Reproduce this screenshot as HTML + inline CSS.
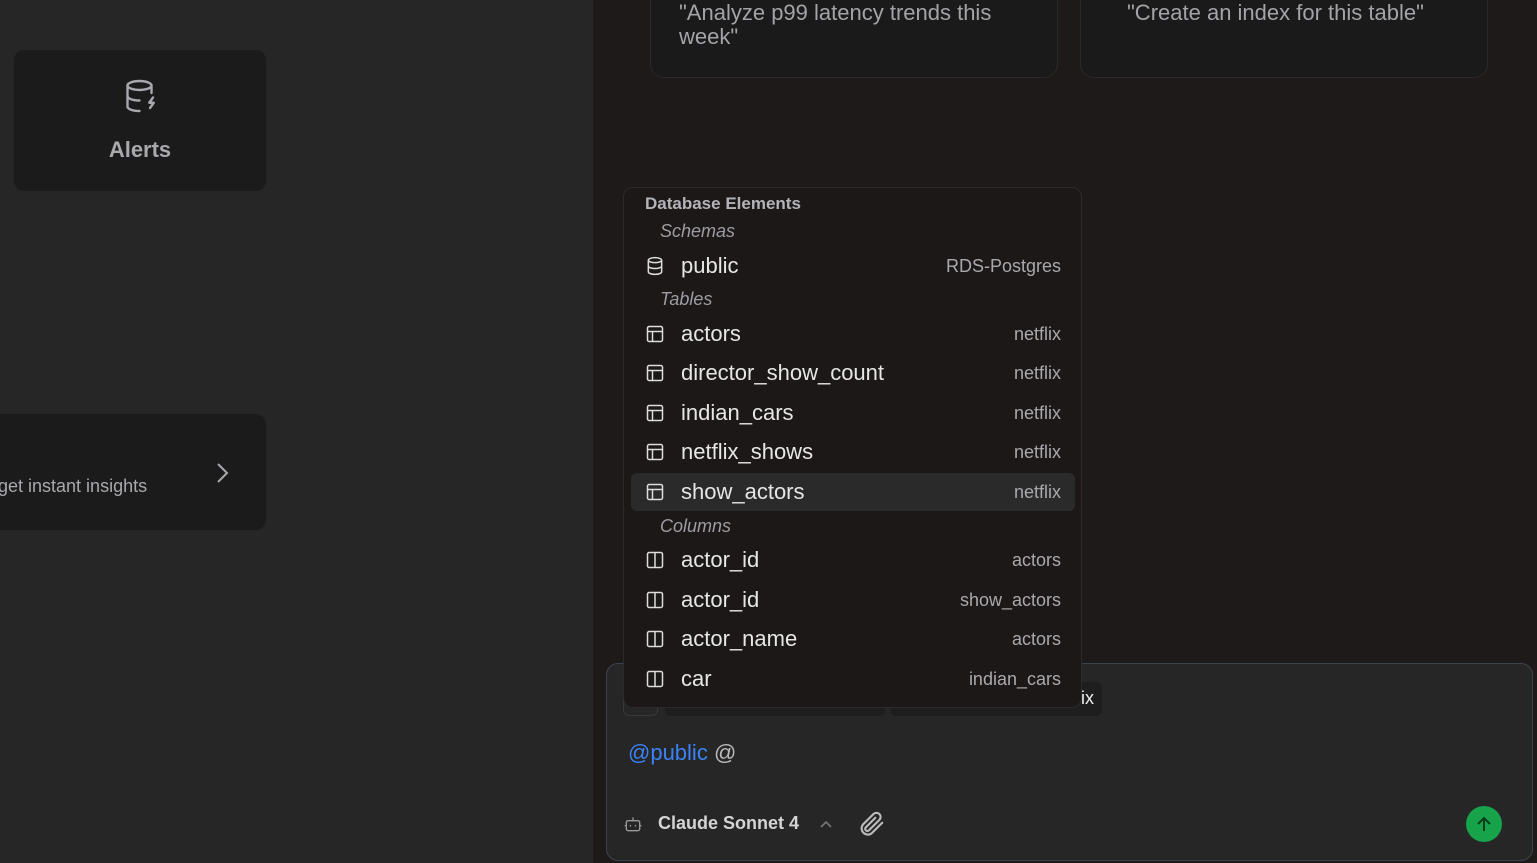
<!DOCTYPE html>
<html><head><style>
*{margin:0;padding:0;box-sizing:border-box}
body{width:1537px;height:863px;overflow:hidden;background:#1e1a19;font-family:"Liberation Sans",sans-serif;position:relative}
.left{position:absolute;left:0;top:0;width:593px;height:863px;background:#262626}
.card{position:absolute;background:#1b1b1b;border-radius:10px}
.abs{position:absolute}
.sug{position:absolute;top:-20px;height:98px;background:#1b1a1a;border:1px solid #2a2a2a;border-radius:14px;color:#a3a3a8;font-size:22px;line-height:24px;padding:20px 28px}
.input{position:absolute;left:606px;top:663px;width:927px;height:198px;background:#262626;border:1px solid #3e424b;border-radius:12px}
.dd{position:absolute;left:623px;top:187px;width:459px;height:521px;background:#1c1817;border:1px solid #2b2b2e;border-radius:10px}
.row{position:absolute;left:7px;width:444px;height:38px;border-radius:6px}
.row .n{position:absolute;left:50px;top:6px;font-size:22px;color:#e6e6e6}
.row .s{position:absolute;right:14px;top:9px;font-size:18px;color:#a9a9ad}
.row svg{position:absolute;left:14px;top:9px}
.h{position:absolute;font-size:18px;font-style:italic;color:#9c9ca2;left:36px}
</style></head><body>
<div class="left"></div>
<div class="card" style="left:14px;top:50px;width:252px;height:141px">
<svg class="abs" style="left:109px;top:28px" width="36" height="36" viewBox="0 0 24 24" fill="none" stroke="#a8a8ad" stroke-width="1.6" stroke-linecap="round" stroke-linejoin="round"><ellipse cx="11" cy="5" rx="8" ry="3"/><path d="M3 5v14c0 1.7 3.6 3 8 3"/><path d="M3 12c0 1.7 3.6 3 8 3"/><path d="M19 5v5"/><path d="M20 13l-2.5 3.5h3L18 20"/></svg>
<div class="abs" style="left:0;width:252px;top:87px;text-align:center;font-size:22px;color:#a8a8ad;font-weight:bold">Alerts</div>
</div>
<div class="card" style="left:-20px;top:414px;width:286px;height:116px">
<div class="abs" style="left:18px;top:62px;font-size:18px;color:#a8a8ad">get instant insights</div>
<svg class="abs" style="left:234px;top:47px" width="16" height="24" viewBox="0 0 16 24" fill="none" stroke="#a8a8ad" stroke-width="2"><path d="M4 3l9 9-9 9"/></svg>
</div>
<div class="sug" style="left:650px;width:408px">"Analyze p99 latency trends this week"</div>
<div class="sug" style="left:1080px;width:408px;padding-left:46px">"Create an index for this table"</div>
<div class="input">
<div class="abs" style="left:16px;top:20px;width:35px;height:32px;border:1px solid #3a3a3a;border-radius:6px"></div>
<div class="abs" style="left:58px;top:18px;width:220px;height:34px;background:#1e1e1e;border-radius:6px"></div>
<div class="abs" style="left:283px;top:18px;width:212px;height:34px;background:#1e1e1e;border-radius:6px;color:#eee;font-size:18px;text-align:right;padding:6px 8px">ix</div>
<div class="abs" style="left:21px;top:76px;font-size:22px;color:#3b82f6">@public <span style="color:#bbb">@</span></div>
<svg class="abs" style="left:16px;top:150px" width="20" height="20" viewBox="0 0 24 24" fill="none" stroke="#999" stroke-width="1.6"><rect x="4" y="8" width="16" height="12" rx="2"/><path d="M12 4v4M2 14h2M20 14h2M9 13v2M15 13v2"/></svg>
<div class="abs" style="left:51px;top:149px;font-size:18px;color:#d4d4d4;font-weight:bold">Claude Sonnet 4</div>
<svg class="abs" style="left:211px;top:152px" width="16" height="16" viewBox="0 0 16 16" fill="none" stroke="#777" stroke-width="1.6"><path d="M3 11l5-5 5 5"/></svg>
<svg class="abs" style="left:249px;top:145px" width="30" height="30" viewBox="0 0 24 24" fill="none" stroke="#bbb" stroke-width="1.7" stroke-linecap="round"><path d="M21 11l-8.5 8.5a5 5 0 01-7-7L14 4a3.3 3.3 0 014.7 4.7l-8.5 8.5a1.7 1.7 0 01-2.4-2.4L15.5 7"/></svg>
<div class="abs" style="left:859px;top:142px;width:36px;height:36px;border-radius:50%;background:#16a34a"></div>
<svg class="abs" style="left:867px;top:150px" width="20" height="20" viewBox="0 0 20 20" fill="none" stroke="#0b3d1c" stroke-width="2"><path d="M10 17V4M4 10l6-6 6 6"/></svg>
</div>
<div class="dd">
<div class="abs" style="left:21px;top:6px;font-size:17px;color:#b3b3b8;font-weight:bold">Database Elements</div>
<div class="h" style="top:33px">Schemas</div>
<div class="row" style="top:59px"><svg width="20" height="20" viewBox="0 0 24 24" fill="none" stroke="#ddd" stroke-width="1.8"><ellipse cx="12" cy="5" rx="8" ry="3"/><path d="M4 5v14c0 1.7 3.6 3 8 3s8-1.3 8-3V5M4 12c0 1.7 3.6 3 8 3s8-1.3 8-3"/></svg><span class="n">public</span><span class="s">RDS-Postgres</span></div>
<div class="h" style="top:101px">Tables</div>
<div class="row" style="top:127px"><svg width="20" height="20" viewBox="0 0 24 24" fill="none" stroke="#ddd" stroke-width="1.8"><rect x="3" y="3" width="18" height="18" rx="2"/><path d="M3 9h18M9 9v12"/></svg><span class="n">actors</span><span class="s">netflix</span></div>
<div class="row" style="top:166px"><svg width="20" height="20" viewBox="0 0 24 24" fill="none" stroke="#ddd" stroke-width="1.8"><rect x="3" y="3" width="18" height="18" rx="2"/><path d="M3 9h18M9 9v12"/></svg><span class="n">director_show_count</span><span class="s">netflix</span></div>
<div class="row" style="top:206px"><svg width="20" height="20" viewBox="0 0 24 24" fill="none" stroke="#ddd" stroke-width="1.8"><rect x="3" y="3" width="18" height="18" rx="2"/><path d="M3 9h18M9 9v12"/></svg><span class="n">indian_cars</span><span class="s">netflix</span></div>
<div class="row" style="top:245px"><svg width="20" height="20" viewBox="0 0 24 24" fill="none" stroke="#ddd" stroke-width="1.8"><rect x="3" y="3" width="18" height="18" rx="2"/><path d="M3 9h18M9 9v12"/></svg><span class="n">netflix_shows</span><span class="s">netflix</span></div>
<div class="row" style="top:285px;background:#2a2a2b"><svg width="20" height="20" viewBox="0 0 24 24" fill="none" stroke="#ddd" stroke-width="1.8"><rect x="3" y="3" width="18" height="18" rx="2"/><path d="M3 9h18M9 9v12"/></svg><span class="n">show_actors</span><span class="s">netflix</span></div>
<div class="h" style="top:328px">Columns</div>
<div class="row" style="top:353px"><svg width="20" height="20" viewBox="0 0 24 24" fill="none" stroke="#ddd" stroke-width="1.8"><rect x="3" y="3" width="18" height="18" rx="2"/><path d="M12 3v18"/></svg><span class="n">actor_id</span><span class="s">actors</span></div>
<div class="row" style="top:393px"><svg width="20" height="20" viewBox="0 0 24 24" fill="none" stroke="#ddd" stroke-width="1.8"><rect x="3" y="3" width="18" height="18" rx="2"/><path d="M12 3v18"/></svg><span class="n">actor_id</span><span class="s">show_actors</span></div>
<div class="row" style="top:432px"><svg width="20" height="20" viewBox="0 0 24 24" fill="none" stroke="#ddd" stroke-width="1.8"><rect x="3" y="3" width="18" height="18" rx="2"/><path d="M12 3v18"/></svg><span class="n">actor_name</span><span class="s">actors</span></div>
<div class="row" style="top:472px"><svg width="20" height="20" viewBox="0 0 24 24" fill="none" stroke="#ddd" stroke-width="1.8"><rect x="3" y="3" width="18" height="18" rx="2"/><path d="M12 3v18"/></svg><span class="n">car</span><span class="s">indian_cars</span></div>
</div>
</body></html>
